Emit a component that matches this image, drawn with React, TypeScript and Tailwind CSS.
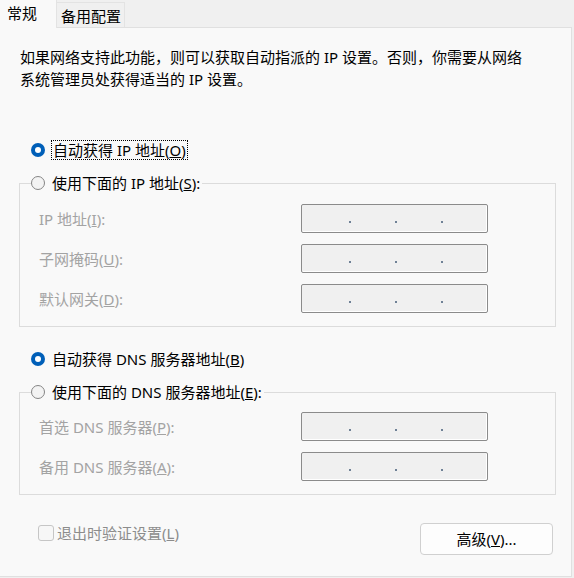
import React from 'react';

const FONT = 'font-["Noto_Sans","Noto_Sans_CJK_SC",sans-serif]';

const Radio = ({ checked }: { checked?: boolean }) =>
  checked ? (
    <span className="flex h-[14px] w-[14px] shrink-0 items-center justify-center rounded-full bg-[#005fb8]">
      <span className="h-[6px] w-[6px] rounded-full bg-white" />
    </span>
  ) : (
    <span className="h-[14px] w-[14px] shrink-0 rounded-full border border-[#858585] bg-[#f3f3f3]" />
  );

const IpBox = () => (
  <div className="flex h-[29px] w-[187px] gap-[44px] rounded-[2px] border border-[#8b8b8b] bg-[#f0f0f0] pl-[47px] pt-[16px] shadow-[inset_-1px_-1px_0_#ffffff]">
    {[0, 1, 2].map((i) => (
      <span key={i} className="h-[2px] w-[2px] bg-[#6f8196]" />
    ))}
  </div>
);

const Field = ({ label, keyChar }: { label: string; keyChar: string }) => (
  <div className="flex h-[29px] items-center">
    <span className="w-[281px] shrink-0 pl-[19px] text-[#a3a3a3]">
      {label}(<span className="underline">{keyChar}</span>):
    </span>
    <IpBox />
  </div>
);

export default function App() {
  return (
    <div className={`h-[578px] w-[574px] overflow-hidden bg-[#f0f0f0] text-[15px] leading-[20px] text-black ${FONT}`}>
      {/* tabs */}
      <div className="relative z-10 flex h-[27px]">
        <div className="h-[28px] w-[57px] border-r border-[#e3e3e3] bg-[#f9f9f9] pl-[7px] pt-[3px]">常规</div>
        <div className="mt-[2px] h-[25px] w-[68px] border-r border-t border-[#e3e3e3] bg-[#f0f0f0] pl-[4px] pt-[3px]">
          备用配置
        </div>
      </div>

      {/* panel */}
      <div className="flex h-[550px] w-[572px] flex-col border-b border-r border-t border-[#e0e0e0] bg-[#f9f9f9] pl-[19px]">
        <p className="ml-px mt-[18px] w-[512px] leading-[22px]">
          如果网络支持此功能，则可以获取自动指派的 IP 设置。否则，你需要从网络系统管理员处获得适当的 IP 设置。
        </p>

        <div className="ml-[12px] mt-[50px] flex h-[20px] items-center gap-[6px]">
          <Radio checked />
          <span className="border border-dotted border-black px-px leading-[18px]">
            自动获得 IP 地址(<span className="underline">O</span>)
          </span>
        </div>

        <fieldset className="mt-[13px] w-[537px] border border-[#dcdcdc] pb-[13px]">
          <legend className="ml-[11px] flex h-[20px] items-center gap-[7px] pr-[2px]">
            <Radio />
            <span>
              使用下面的 IP 地址(<span className="underline">S</span>):
            </span>
          </legend>
          <div className="mt-[11px] flex flex-col gap-[11px]">
            <Field label="IP 地址" keyChar="I" />
            <Field label="子网掩码" keyChar="U" />
            <Field label="默认网关" keyChar="D" />
          </div>
        </fieldset>

        <div className="ml-[12px] mt-[22px] flex h-[20px] items-center gap-[7px]">
          <Radio checked />
          <span>
            自动获得 DNS 服务器地址(<span className="underline">B</span>)
          </span>
        </div>

        <fieldset className="mt-[13px] w-[537px] border border-[#dcdcdc] pb-[13px]">
          <legend className="ml-[11px] flex h-[20px] items-center gap-[7px] pr-[2px]">
            <Radio />
            <span>
              使用下面的 DNS 服务器地址(<span className="underline">E</span>):
            </span>
          </legend>
          <div className="mt-[10px] flex flex-col gap-[11px]">
            <Field label="首选 DNS 服务器" keyChar="P" />
            <Field label="备用 DNS 服务器" keyChar="A" />
          </div>
        </fieldset>

        <div className="mt-[28px] flex h-[32px] items-start justify-between pr-[18px]">
          <label className="ml-[19px] mt-[2px] flex h-[16px] items-center gap-[3px] text-[#8c8c8c]">
            <span className="h-[16px] w-[16px] rounded-[3px] border border-[#c6c6c6] bg-[#f7f7f7]" />
            <span>
              退出时验证设置(<span className="underline">L</span>)
            </span>
          </label>
          <button className="h-[32px] w-[133px] rounded-[4px] border border-[#d0d0d0] bg-[#fdfdfd] text-black">
            高级(<span className="underline">V</span>)...
          </button>
        </div>
      </div>
    </div>
  );
}
